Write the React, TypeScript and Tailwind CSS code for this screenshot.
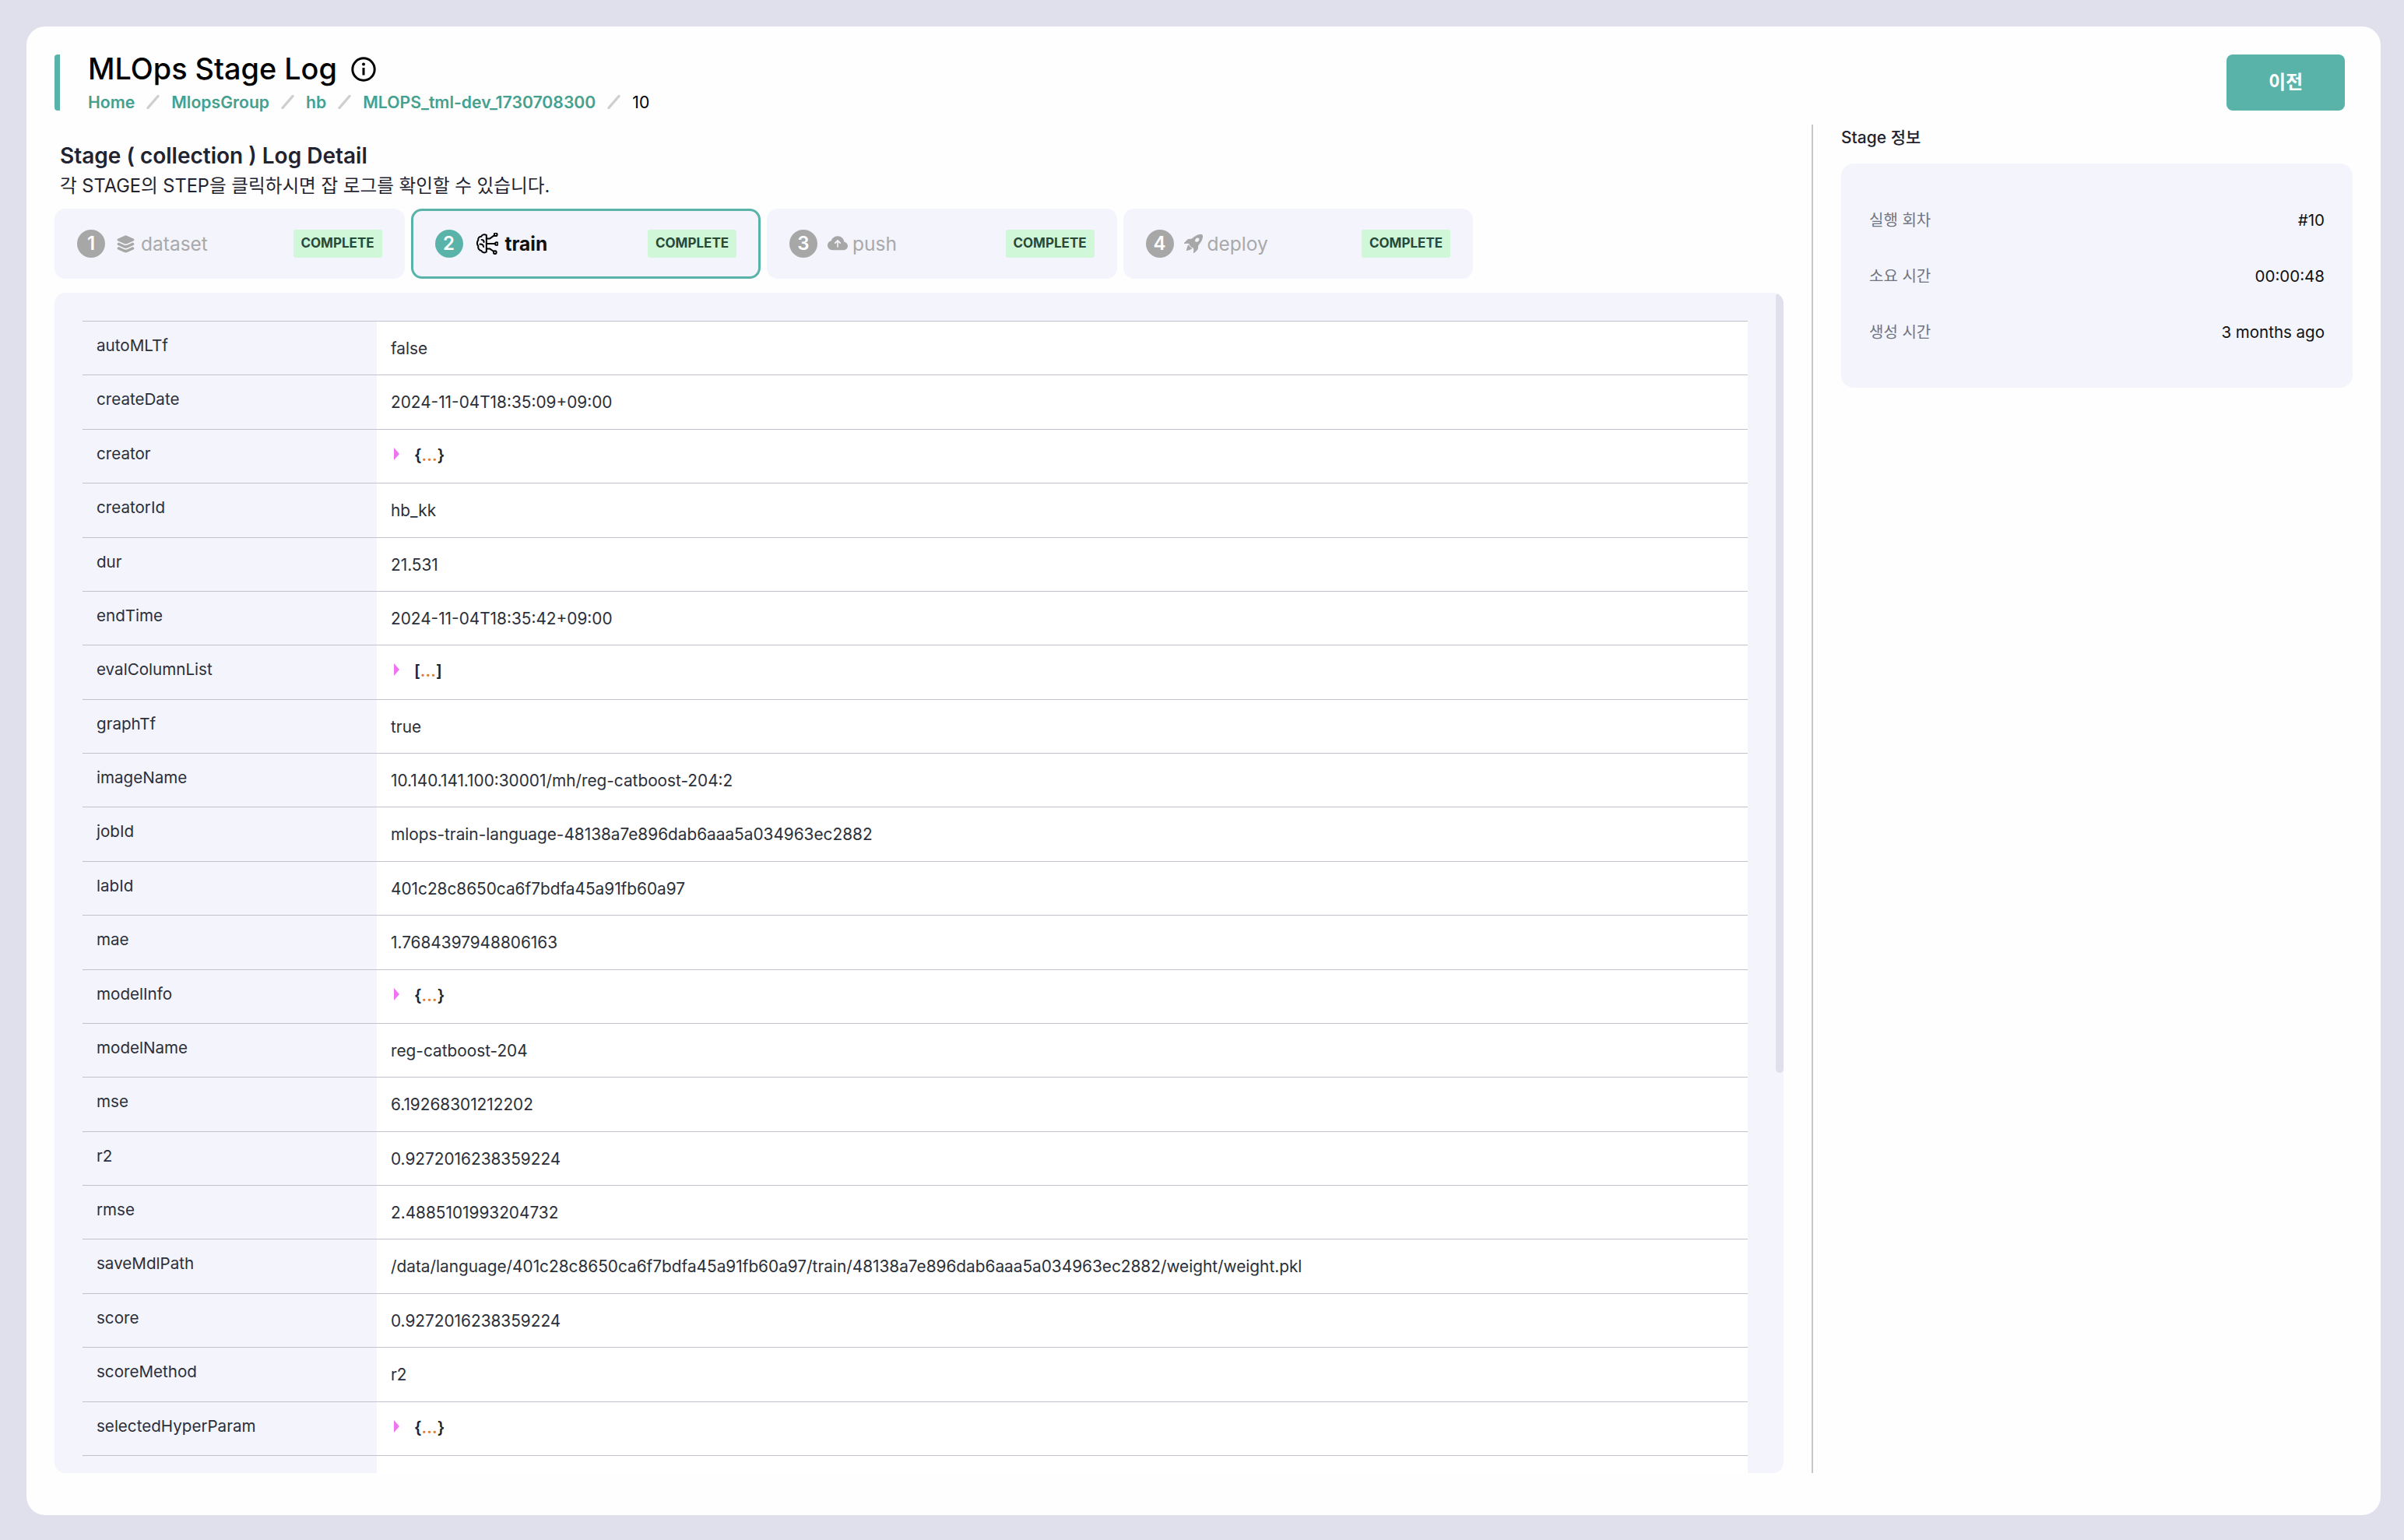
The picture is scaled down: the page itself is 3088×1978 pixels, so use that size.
import { IoLayers } from 'react-icons/io5'
import { BsCloudArrowUpFill, BsRocketTakeoffFill } from 'react-icons/bs'
import type { ReactNode } from 'react'

const FONT = "font-['Inter','Noto_Sans_CJK_KR',sans-serif]"

const crumbs = ['Home', 'MlopsGroup', 'hb', 'MLOPS_tml-dev_1730708300']

function BrainIcon() {
  return (
    <svg width="28" height="28" viewBox="0 0 24 24" fill="none" stroke="currentColor" strokeWidth="1.7" strokeLinecap="round" strokeLinejoin="round">
      <path d="M11 2.6C9 1.3 6.2 1.9 5.4 4C3 4.1 1.5 6 2 8.2C0.4 9.6 0.4 13 2 14.6C1.5 17 3 19.6 5.4 19.7C6.3 21.9 9.3 22.4 11 21Z" />
      <path d="M5.6 7.6C7.2 7.6 8.2 8.6 8.2 10.2M3.8 12.6C5.8 12.2 7.6 13.2 7.8 15.4" />
      <path d="M11 6.5H14.5L19.6 2.9M11 12H20.4M11 17.5H14.5L18.8 20.4" />
      <circle cx="21.2" cy="1.9" r="1.6" />
      <circle cx="22.2" cy="12" r="1.6" />
      <circle cx="20.4" cy="21.6" r="1.6" />
    </svg>
  )
}

const steps: { no: number; label: string; icon: ReactNode; active?: boolean }[] = [
  { no: 1, label: 'dataset', icon: <IoLayers className="w-[27px] h-[27px]" /> },
  { no: 2, label: 'train', icon: <BrainIcon />, active: true },
  { no: 3, label: 'push', icon: <BsCloudArrowUpFill className="w-[26px] h-[26px]" /> },
  { no: 4, label: 'deploy', icon: <BsRocketTakeoffFill className="w-[24px] h-[24px]" /> },
]

const rows: [string, string][] = [
  ['autoMLTf', 'false'],
  ['createDate', '2024-11-04T18:35:09+09:00'],
  ['creator', '{}'],
  ['creatorId', 'hb_kk'],
  ['dur', '21.531'],
  ['endTime', '2024-11-04T18:35:42+09:00'],
  ['evalColumnList', '[]'],
  ['graphTf', 'true'],
  ['imageName', '10.140.141.100:30001/mh/reg-catboost-204:2'],
  ['jobId', 'mlops-train-language-48138a7e896dab6aaa5a034963ec2882'],
  ['labId', '401c28c8650ca6f7bdfa45a91fb60a97'],
  ['mae', '1.7684397948806163'],
  ['modelInfo', '{}'],
  ['modelName', 'reg-catboost-204'],
  ['mse', '6.19268301212202'],
  ['r2', '0.9272016238359224'],
  ['rmse', '2.4885101993204732'],
  ['saveMdlPath', '/data/language/401c28c8650ca6f7bdfa45a91fb60a97/train/48138a7e896dab6aaa5a034963ec2882/weight/weight.pkl'],
  ['score', '0.9272016238359224'],
  ['scoreMethod', 'r2'],
  ['selectedHyperParam', '{}'],
  ['', ''],
]

const info = [
  ['실행 회차', '#10'],
  ['소요 시간', '00:00:48'],
  ['생성 시간', '3 months ago'],
]

function Slash() {
  return (
    <svg width="17" height="18" viewBox="0 0 17 18" className="shrink-0">
      <line x1="2" y1="16.5" x2="15" y2="1.5" stroke="#cfcfcf" strokeWidth="3.4" strokeLinecap="round" />
    </svg>
  )
}

function Collapsed({ value }: { value: string }) {
  return (
    <div className="flex items-center -mt-[2px]">
      <span className="w-0 h-0 border-y-[8px] border-y-transparent border-l-[7px] border-l-[#ee74f0] ml-[4px] -mt-[4px]" />
      <span className="ml-[19px] text-[#1f2430] font-semibold text-[21px]">
        {value[0]}
        <span className="text-[#e07a2c]">...</span>
        {value[1]}
      </span>
    </div>
  )
}

function Step({ no, label, icon, active }: { no: number; label: string; icon: ReactNode; active?: boolean }) {
  return (
    <div
      className={`w-[449.5px] h-[90px] rounded-[14px] bg-[#f4f4fd] flex items-center ${
        active ? 'border-[3px] border-[#5ab3a8] px-[28px]' : 'px-[29px]'
      }`}
    >
      <span
        className={`w-[36px] h-[36px] rounded-full flex items-center justify-center text-white text-[24px] font-semibold ${
          active ? 'bg-[#5ab3a8]' : 'bg-[#a7a7a7]'
        }`}
      >
        {no}
      </span>
      <span className={`flex items-center ${active ? 'ml-[17px] text-black' : 'ml-[13px] text-[#a7a7a7]'}`}>{icon}</span>
      <span className={`text-[24.5px] ${active ? 'ml-[9px] text-[#111] font-bold' : 'ml-[6px] text-[#a9a9a9]'}`}>{label}</span>
      <span className="ml-auto w-[114px] h-[36px] rounded-[3px] bg-[#d1f7d9] text-[#27493a] text-[17px] font-bold flex items-center justify-center">
        COMPLETE
      </span>
    </div>
  )
}

export default function App() {
  return (
    <div className={`w-[3088px] h-[1978px] bg-[#e0e0ec] p-[34px] ${FONT}`}>
      <div className="w-[3024px] h-[1912px] rounded-[24px] bg-[#fefefe] flex flex-col pt-[36px] pl-[36px] pr-[36px] overflow-hidden">
        {/* Header */}
        <div className="flex justify-between h-[72px] shrink-0">
          <div className="flex border-l-[7px] border-[#5ab3a8] rounded-[4px] pl-[36px]">
            <div>
              <div className="flex items-center h-[38px] -mt-[1px]">
                <h1 className="text-[37.8px] leading-[38px] font-medium text-black">MLOps Stage Log</h1>
                <svg width="32" height="32" viewBox="0 0 32 32" className="ml-[18px] mt-[2px]" fill="none">
                  <circle cx="16" cy="16" r="14.2" stroke="#000" strokeWidth="3" />
                  <circle cx="16" cy="9.5" r="2" fill="#000" />
                  <line x1="16" y1="14" x2="16" y2="23.5" stroke="#000" strokeWidth="3" />
                </svg>
              </div>
              <div className="flex items-center mt-[11px] gap-[15px] text-[21.2px] leading-[26px]">
                {crumbs.map(c => (
                  <div key={c} className="flex items-center gap-[15px]">
                    <span className="text-[#44a08f] font-semibold">{c}</span>
                    <Slash />
                  </div>
                ))}
                <span className="text-black">10</span>
              </div>
            </div>
          </div>
          <button className="w-[152px] h-[72px] mr-[10px] rounded-[8px] bg-[#5ab3a8] text-white text-[24px] font-semibold">
            이전
          </button>
        </div>

        {/* Body */}
        <div className="flex mt-[18px] h-[1732px]">
          <div className="w-[2221px] shrink-0 flex flex-col">
            <h2 className="mt-[20px] ml-[7px] text-[28px] leading-[40px] font-semibold text-[#1f2430]">
              Stage ( collection ) Log Detail
            </h2>
            <p className="ml-[7px] text-[23.6px] leading-[38px] text-[#1f2430]">
              각 STAGE의 STEP을 클릭하시면 잡 로그를 확인할 수 있습니다.
            </p>
            <div className="flex gap-[8px] mt-[10px]">
              {steps.map(s => (
                <Step key={s.no} {...s} />
              ))}
            </div>
            <div className="relative mt-[18px] h-[1516px] rounded-[14px] bg-[#f4f4fd] pt-[36px] pl-[36px] pr-[46px] overflow-hidden">
              <div className="border-t border-[#c2c2ce]">
                {rows.map(([k, v], i) => (
                  <div key={i} className="grid grid-cols-[378px_1fr] h-[69.38px] border-b border-[#c2c2ce] leading-[28px]">
                    <div className="pl-[18px] pt-[17px] text-[20.6px] text-[#2a2f3a]">{k}</div>
                    <div className="bg-white pl-[18px] pt-[21px] text-[20.8px] text-[#2a2f3a]">
                      {v === '{}' || v === '[]' ? <Collapsed value={v} /> : v}
                    </div>
                  </div>
                ))}
              </div>
              <div className="absolute top-0 right-0 w-[10px] h-[1002px] rounded-[6px] bg-[#e0e0ec]" />
            </div>
          </div>

          {/* Side info */}
          <div className="ml-[36px] flex-1 border-l-[2px] border-[#c8c8c8] pl-[36px]">
            <div className="text-[21px] leading-[34px] font-medium text-[#1f2430]">Stage 정보</div>
            <div className="mt-[16px] h-[288px] rounded-[16px] bg-[#f4f4fd] px-[36px] pt-[59px] flex flex-col gap-[44px]">
              {info.map(([k, v]) => (
                <div key={k} className="flex justify-between leading-[28px]">
                  <span className="text-[20px] text-[#70747f]">{k}</span>
                  <span className="text-[20.5px] text-[#111]">{v}</span>
                </div>
              ))}
            </div>
          </div>
        </div>
      </div>
    </div>
  )
}
